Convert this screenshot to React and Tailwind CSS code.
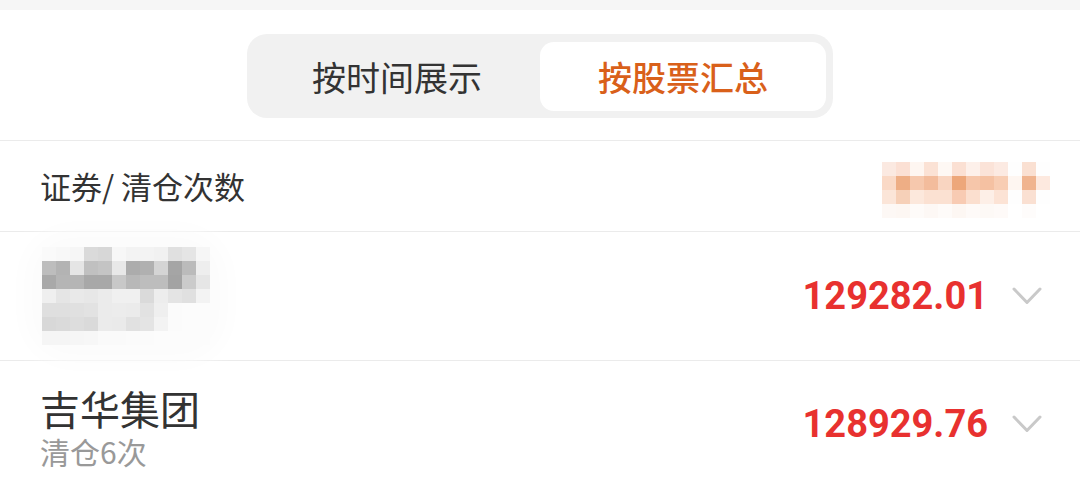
import { useState } from 'react';

const CJK = { fontFamily: '"Noto Sans CJK SC", "Noto Sans", sans-serif' };
const NUM = { fontFamily: 'Roboto, "Noto Sans", sans-serif' };

// mosaic cells copied from the masked areas of the screenshot
const nameMosaic = [
  ['bg-[#fafafa]', 'bg-[#f8f8f8]', 'bg-[#f6f6f6]', 'bg-[#dadada]', 'bg-[#d7d7d7]', 'bg-[#f7f7f7]', 'bg-[#f3f3f3]', 'bg-[#f3f3f3]', 'bg-[#f1f1f1]', 'bg-[#e0e0e0]', 'bg-[#e5e5e5]', 'bg-[#f6f6f6]'],
  ['bg-[#bdbdbd]', 'bg-[#b3b3b3]', 'bg-[#e5e5e5]', 'bg-[#c0c0c0]', 'bg-[#c4c4c4]', 'bg-[#e8e8e8]', 'bg-[#acacac]', 'bg-[#b0b0b0]', 'bg-[#d4d4d4]', 'bg-[#a5a5a5]', 'bg-[#bbbbbb]', 'bg-[#eeeeee]'],
  ['bg-[#a9a9a9]', 'bg-[#b5b5b5]', 'bg-[#b5b5b5]', 'bg-[#a8a8a8]', 'bg-[#a8a8a8]', 'bg-[#c8c8c8]', 'bg-[#b8b8b8]', 'bg-[#bdbdbd]', 'bg-[#bdbdbd]', 'bg-[#a3a3a3]', 'bg-[#cbcbcb]', 'bg-[#e6e6e6]'],
  ['bg-[#efefef]', 'bg-[#e5e5e5]', 'bg-[#e9e9e9]', 'bg-[#e7e7e7]', 'bg-[#ebebeb]', 'bg-[#f0f0f0]', 'bg-[#f0f0f0]', 'bg-[#dadada]', 'bg-[#ededed]', 'bg-[#e4e4e4]', 'bg-[#e0e0e0]', 'bg-[#f3f3f3]'],
  ['bg-[#dfdfdf]', 'bg-[#dfdfdf]', 'bg-[#e0e0e0]', 'bg-[#e2e2e2]', 'bg-[#ebebeb]', 'bg-[#ececec]', 'bg-[#ebebeb]', 'bg-[#e2e2e2]', 'bg-[#efefef]', 'bg-[#fbfbfb]', 'bg-[#fcfcfc]', 'bg-[#fcfcfc]'],
  ['bg-[#d8d8d8]', 'bg-[#dadada]', 'bg-[#dddddd]', 'bg-[#dadada]', 'bg-[#ebebeb]', 'bg-[#eaeaea]', 'bg-[#e1e1e1]', 'bg-[#e4e4e4]', 'bg-[#f3f3f3]', 'bg-[#fbfbfb]', 'bg-[#fcfcfc]', 'bg-[#fcfcfc]'],
  ['bg-[#f5f5f5]', 'bg-[#f5f5f5]', 'bg-[#f6f6f6]', 'bg-[#f7f7f7]', 'bg-[#fafafa]', 'bg-[#fafafa]', 'bg-[#fbfbfb]', 'bg-[#fbfbfb]', 'bg-[#fcfcfc]', 'bg-[#fcfcfc]', 'bg-[#fcfcfc]', 'bg-[#fcfcfc]'],
];

const valueMosaic = [
  ['bg-[#fbe9e1]', 'bg-[#fbe0d4]', 'bg-[#fef6f1]', 'bg-[#fbe2d5]', 'bg-[#fef8f4]', 'bg-[#fbe0d3]', 'bg-[#fdf0ea]', 'bg-[#fbe3d8]', 'bg-[#fceae2]', 'bg-[#fefefe]', 'bg-[#fae0d2]', 'bg-[#fefefe]'],
  ['bg-[#fad9c6]', 'bg-[#eeae85]', 'bg-[#f6c8ad]', 'bg-[#f3bc9c]', 'bg-[#f9d5c1]', 'bg-[#eda77a]', 'bg-[#f6c6aa]', 'bg-[#f5c1a2]', 'bg-[#f8cdb3]', 'bg-[#fef6f1]', 'bg-[#f0b48f]', 'bg-[#fde9df]'],
  ['bg-[#fbe5d8]', 'bg-[#f6d0b8]', 'bg-[#fce8dc]', 'bg-[#fbe1d2]', 'bg-[#fbe1d2]', 'bg-[#f8cbb3]', 'bg-[#fbdfcf]', 'bg-[#fdefe7]', 'bg-[#fce3d5]', 'bg-[#fefefe]', 'bg-[#fae0d2]', 'bg-[#fefefe]'],
  ['bg-[#fdf8f5]', 'bg-[#fdf7f3]', 'bg-[#fefbf9]', 'bg-[#fdf8f5]', 'bg-[#fefbf9]', 'bg-[#fdf7f3]', 'bg-[#fefaf8]', 'bg-[#fdf9f6]', 'bg-[#fefaf8]', 'bg-[#ffffff]', 'bg-[#fefcfb]', 'bg-[#ffffff]'],
];

function Mosaic({ cells }) {
  return (
    <div className="flex flex-col">
      {cells.map((row, i) => (
        <div key={i} className="flex">
          {row.map((cls, j) => (
            <div key={j} className={`h-[14px] w-[14px] ${cls}`} />
          ))}
        </div>
      ))}
    </div>
  );
}

function Chevron() {
  return (
    <svg width="30" height="18" viewBox="0 0 30 18" fill="none">
      <polyline points="2,2 15,15.5 28,2" stroke="#c9c9c9" strokeWidth="3" strokeLinecap="round" strokeLinejoin="round" />
    </svg>
  );
}

function Amount({ value }) {
  return (
    <div className="flex items-center gap-[24px]">
      <span className="text-[38px] font-bold leading-none text-[#e8312f]" style={NUM}>
        {value}
      </span>
      <Chevron />
    </div>
  );
}

export default function App() {
  const [tab, setTab] = useState('stock');
  const tabs = [
    { key: 'time', label: '按时间展示' },
    { key: 'stock', label: '按股票汇总' },
  ];

  return (
    <div className="h-[484px] w-[1080px] overflow-hidden bg-white" style={CJK}>
      <div className="h-[10px] bg-[#f6f6f6]" />

      <div className="flex justify-center border-b border-[#ebebeb] pt-[24px] pb-[22px]">
        <div className="flex h-[84px] w-[586px] rounded-[20px] bg-[#f1f1f1] pt-[8px] pb-[7px] px-[7px]">
          {tabs.map((item) => (
            <button
              key={item.key}
              type="button"
              onClick={() => setTab(item.key)}
              className={
                tab === item.key
                  ? 'flex flex-1 items-center justify-center rounded-[14px] bg-white text-[34px] font-medium text-[#d9601a]'
                  : 'flex flex-1 items-center justify-center rounded-[14px] text-[34px] text-[#333333]'
              }
            >
              {item.label}
            </button>
          ))}
        </div>
      </div>

      <div className="flex h-[91px] items-center justify-between border-b border-[#ebebeb] pl-[40px] pr-[30px]">
        <span className="text-[31px] text-[#333333]">证券/ 清仓次数</span>
        <div className="mt-[7px] rounded-[12px] bg-[#fefefe]">
          <Mosaic cells={valueMosaic} />
        </div>
      </div>

      <div className="flex h-[129px] items-center justify-between border-b border-[#ebebeb] pl-[42px] pr-[38px]">
        <div className="rounded-[30px] bg-[#fdfdfd] shadow-[0_0_24px_18px_#fcfcfc]">
          <Mosaic cells={nameMosaic} />
        </div>
        <Amount value="129282.01" />
      </div>

      <div className="flex h-[126px] items-center justify-between pl-[40px] pr-[38px]">
        <div className="mt-[8px] flex flex-col">
          <span className="text-[40px] leading-[46px] text-[#333333]">吉华集团</span>
          <span className="text-[30px] leading-[40px] text-[#999999]">清仓6次</span>
        </div>
        <Amount value="128929.76" />
      </div>
    </div>
  );
}
